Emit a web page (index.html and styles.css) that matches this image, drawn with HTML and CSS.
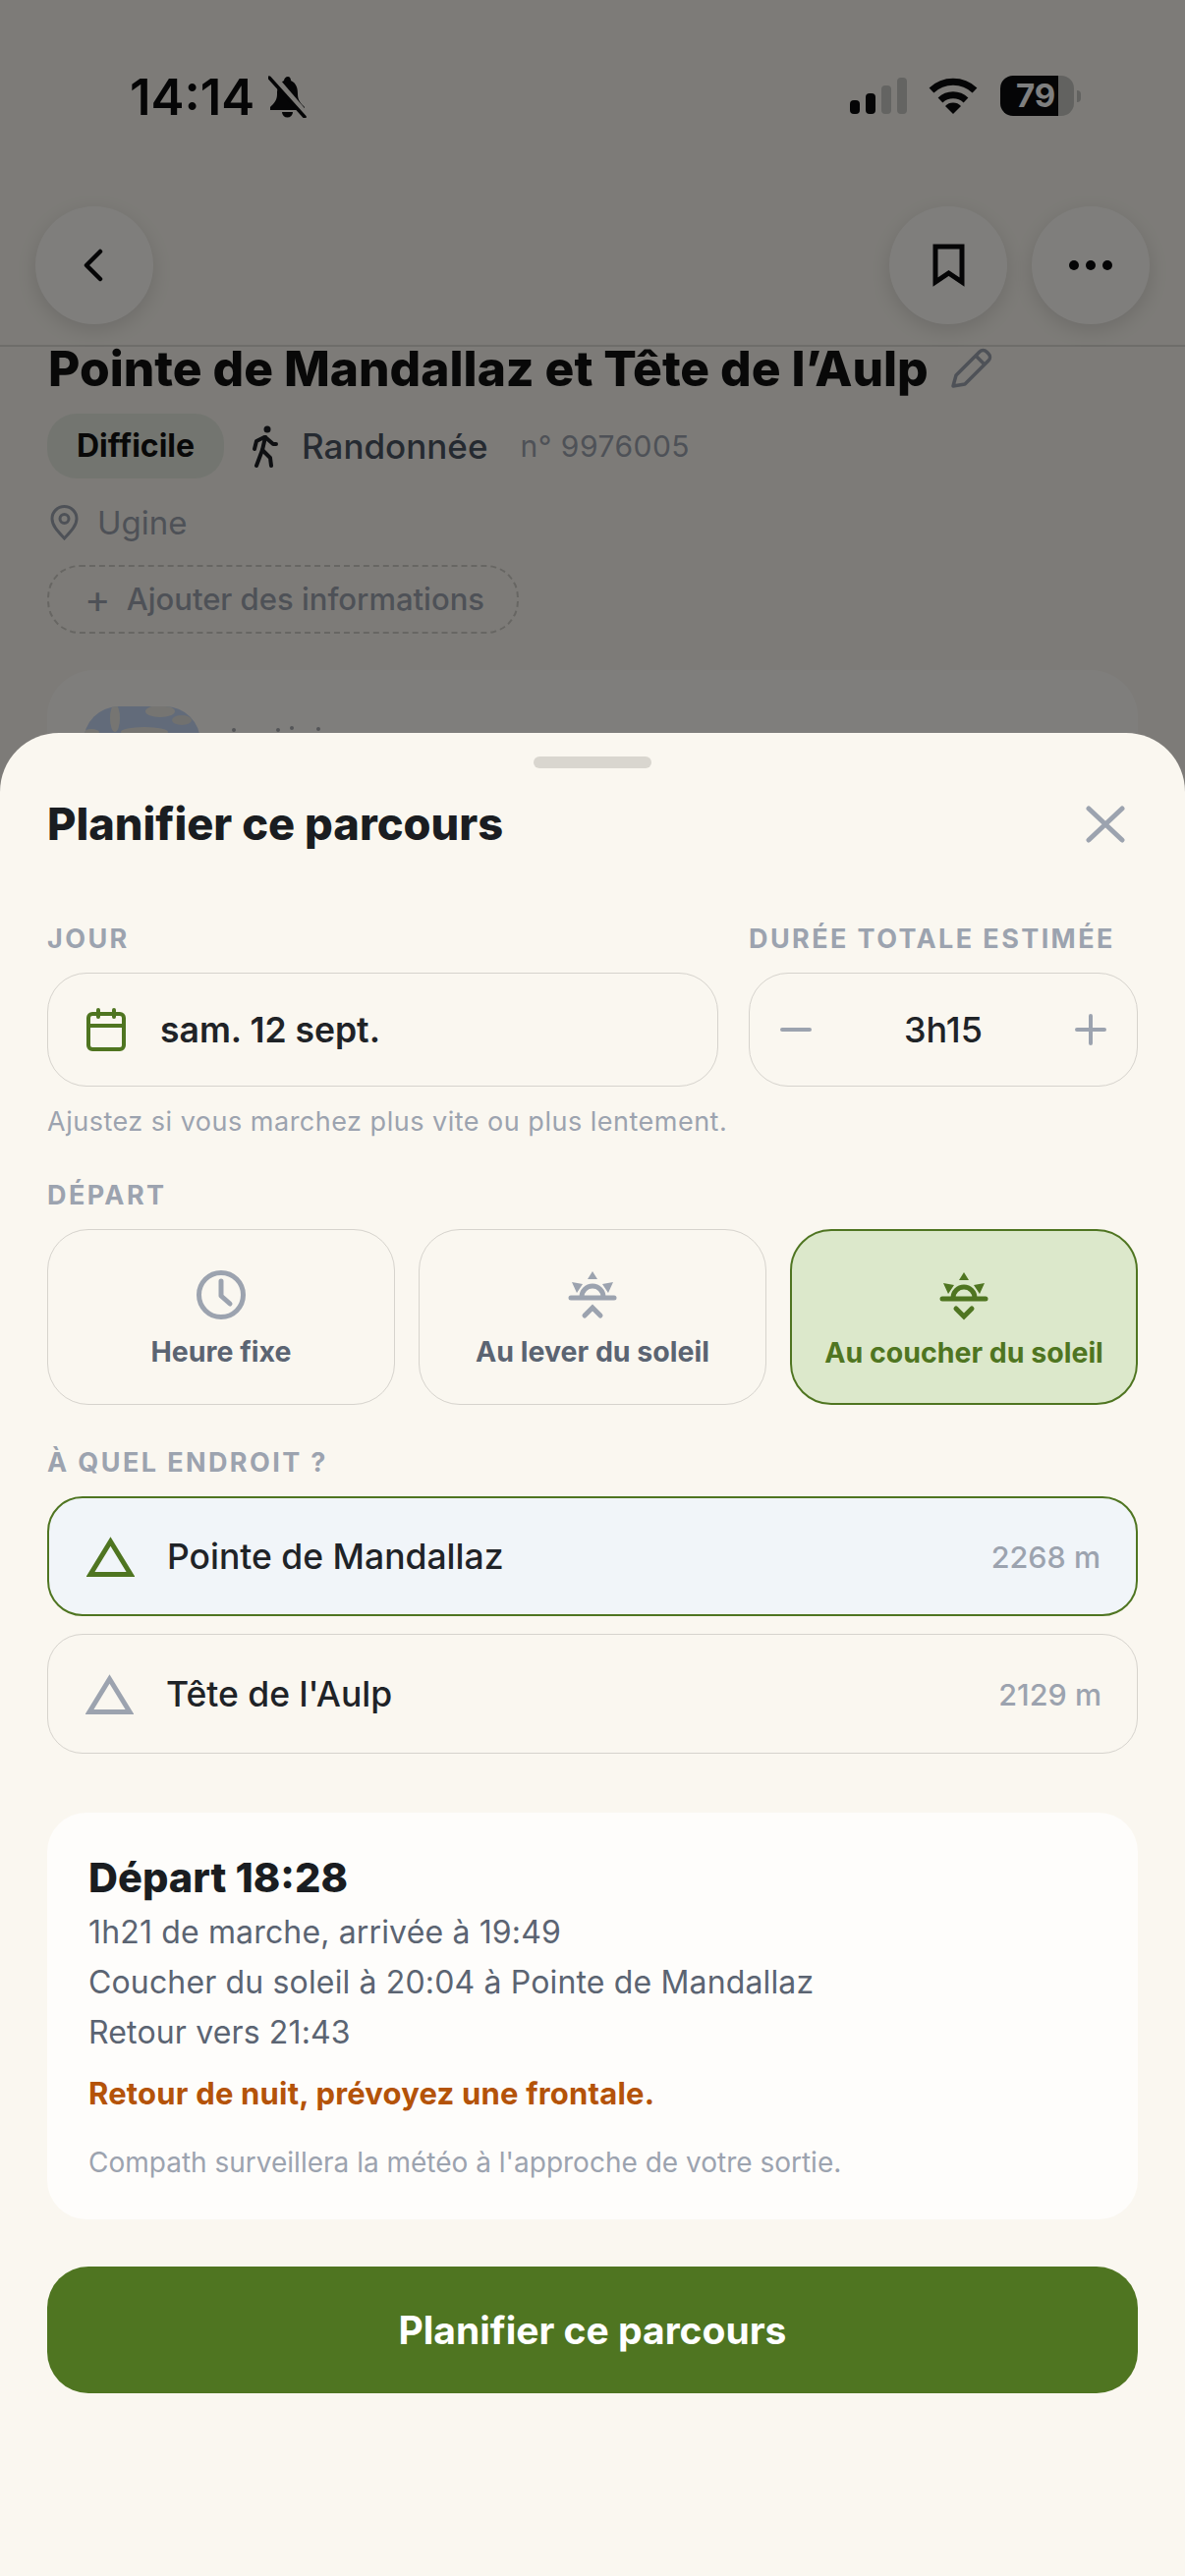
FILE: index.html

```html
<!DOCTYPE html>
<html lang="fr">
<head>
  <meta charset="UTF-8" />
  <meta name="viewport" content="width=device-width, initial-scale=1.0" />
  <title>Planifier ce parcours</title>
  <link rel="stylesheet" href="styles.css">
</head>
<body>

<div class="page">
  <div class="status-bar">
    <div class="status-left">
      <span class="clock">14:14</span>
      <svg class="bell" viewBox="0 0 39 43">
        <path d="M20 1c-2 0-4 2-4 4C10 8 9 13 9 19c0 6-3 9-7 13v3h35v-3c-4-4-7-7-7-13 0-6-1-11-7-14 0-2-1-4-3-4z" fill="#0a0a0c"/>
        <path d="M14 37a5.500 5.500 0 0 0 11 0z" fill="#0a0a0c"/>
        <path d="M4 0l35 41" stroke="#faf7f0" stroke-width="7"/>
        <path d="M1 2l36 40" stroke="#0a0a0c" stroke-width="3.500" stroke-linecap="round"/>
      </svg>
    </div>
    <div class="status-right">
      <div class="signal">
        <i class="bar b1"></i><i class="bar b2"></i><i class="bar b3 off"></i><i class="bar b4 off"></i>
      </div>
      <svg class="wifi" viewBox="0 0 50 37" fill="none" stroke="#0a0a0c" stroke-width="7">
        <path d="M3 13A32 32 0 0 1 47 13"/>
        <path d="M12 23A19 19 0 0 1 38 23"/>
        <path d="M25 37L17 29A11 11 0 0 1 33 29Z" fill="#0a0a0c" stroke="none"/>
      </svg>
      <div class="battery">
        <div class="battery-body"><span>79</span></div>
        <i class="battery-nub"></i>
      </div>
    </div>
  </div>

  <div class="topbar">
    <button class="round-btn">
      <svg class="ico-back" viewBox="0 0 20 34" fill="none" stroke="#0a0a0c" stroke-width="4.500" stroke-linecap="round" stroke-linejoin="round"><path d="M17 3L3 17l14 14"/></svg>
    </button>
    <div class="topbar-right">
      <button class="round-btn">
        <svg class="ico-bookmark" viewBox="0 0 33 44" fill="none" stroke="#0a0a0c" stroke-width="5"><path d="M3 3h27v36l-13.500-9L3 39z"/></svg>
      </button>
      <button class="round-btn">
        <svg class="ico-more" viewBox="0 0 44 10" fill="#0a0a0c"><circle cx="5" cy="5" r="5"/><circle cx="22" cy="5" r="5"/><circle cx="39" cy="5" r="5"/></svg>
      </button>
    </div>
  </div>

  <div class="route">
    <div class="route-title">
      <h1>Pointe de Mandallaz et Tête de l’Aulp</h1>
      <svg class="ico-pencil" viewBox="0 0 43 42" fill="none" stroke="#9ca3af" stroke-width="3.500" stroke-linejoin="round"><path d="M3 39l3-11L30 4c2-2 5-2 7 0l2 2c2 2 2 5 0 7L15 37z"/><path d="M26 8l9 9"/></svg>
    </div>
    <div class="route-meta">
      <span class="chip">Difficile</span>
      <svg class="ico-walk" viewBox="0 0 28 43" fill="none" stroke="#1c1f24" stroke-width="4" stroke-linecap="round" stroke-linejoin="round">
        <circle cx="17" cy="4" r="3.500" fill="#1c1f24" stroke="none"/>
        <path d="M15 12l-3 13-6 16"/>
        <path d="M12 25l8 8 1 8"/>
        <path d="M15 12l8 7h3"/>
        <path d="M14 12l-8 4-2 8"/>
      </svg>
      <span class="activity">Randonnée</span>
      <span class="ref">n° 9976005</span>
    </div>
    <div class="route-place">
      <svg class="ico-pin" viewBox="0 0 29 36" fill="none" stroke="#9ca3af" stroke-width="3"><path d="M14.500 34C8 27 2 21 2 14a12.500 12.500 0 0 1 25 0c0 7-6 13-12.500 20z"/><circle cx="14.500" cy="14" r="4.500"/></svg>
      <span>Ugine</span>
    </div>
    <div class="add-info"><span class="add-plus">+</span> Ajouter des informations</div>
    <div class="route-card">
      <svg class="thumb" viewBox="0 0 119 119">
        <rect width="119" height="119" fill="#c4d6f4"/>
        <ellipse cx="32" cy="12" rx="5" ry="14" fill="#ecebe4"/>
        <ellipse cx="78" cy="5" rx="15" ry="6" fill="#ecebe4"/>
        <ellipse cx="62" cy="26" rx="24" ry="5" fill="#ecebe4"/>
        <ellipse cx="100" cy="14" rx="10" ry="5" fill="#e2e2de"/>
        <ellipse cx="8" cy="26" rx="8" ry="3" fill="#ecebe4"/>
      </svg>
      <svg class="card-marks" viewBox="0 0 96 8" fill="#a8abb0"><circle cx="3" cy="6" r="2"/><circle cx="48" cy="6" r="2"/><circle cx="62" cy="4" r="2"/><circle cx="89" cy="5" r="2"/></svg>
    </div>
  </div>

  <div class="scrim"></div>

  <div class="sheet">
    <div class="handle"></div>
    <div class="sheet-head">
      <h2>Planifier ce parcours</h2>
      <svg class="ico-close" viewBox="0 0 40 38" fill="none" stroke="#9ca3af" stroke-width="5" stroke-linecap="round"><path d="M3 3l34 32M37 3L3 35"/></svg>
    </div>

    <div class="fields">
      <div>
        <div class="label">JOUR</div>
        <div class="field date-field">
          <svg class="ico-cal" viewBox="0 0 40 44" fill="none" stroke="#4f7521" stroke-width="4" stroke-linecap="round"><rect x="2" y="6" width="36" height="36" rx="4"/><path d="M2 18h36M12 2v7M28 2v7"/></svg>
          <span>sam. 12 sept.</span>
        </div>
      </div>
      <div>
        <div class="label">DURÉE TOTALE ESTIMÉE</div>
        <div class="field stepper">
          <svg class="ico-step" viewBox="0 0 32 32" fill="none" stroke="#9ca3af" stroke-width="4" stroke-linecap="round"><path d="M2 16h28"/></svg>
          <span>3h15</span>
          <svg class="ico-step" viewBox="0 0 32 32" fill="none" stroke="#9ca3af" stroke-width="4" stroke-linecap="round"><path d="M2 16h28M16 2v28"/></svg>
        </div>
      </div>
    </div>
    <p class="hint">Ajustez si vous marchez plus vite ou plus lentement.</p>

    <div class="label depart-label">DÉPART</div>
    <div class="options">
      <div class="option">
        <svg class="ico-opt" viewBox="0 0 50 50" fill="none" stroke="currentColor" stroke-width="5" stroke-linecap="round" stroke-linejoin="round"><circle cx="25" cy="25" r="22.500"/><path d="M25 11v15l9 8"/></svg>
        <span>Heure fixe</span>
      </div>
      <div class="option">
        <svg class="ico-opt" viewBox="0 0 50 48" fill="none" stroke="currentColor" stroke-width="5" stroke-linecap="round">
          <path d="M25 0l5 8H20zM4 11l11 2-6 9zM46 11l-11 2 6 9z" fill="currentColor" stroke="none"/>
          <path d="M14 26a11 11 0 0 1 22 0" stroke-linecap="butt"/>
          <path d="M3 27h44"/>
          <path d="M17 45l8-8 8 8" stroke-linejoin="miter"/>
        </svg>
        <span>Au lever du soleil</span>
      </div>
      <div class="option selected">
        <svg class="ico-opt" viewBox="0 0 50 48" fill="none" stroke="currentColor" stroke-width="5" stroke-linecap="round">
          <path d="M25 0l5 8H20zM4 11l11 2-6 9zM46 11l-11 2 6 9z" fill="currentColor" stroke="none"/>
          <path d="M14 26a11 11 0 0 1 22 0" stroke-linecap="butt"/>
          <path d="M3 27h44"/>
          <path d="M17 37l8 8 8-8" stroke-linejoin="miter"/>
        </svg>
        <span>Au coucher du soleil</span>
      </div>
    </div>

    <div class="label place-label">À QUEL ENDROIT ?</div>
    <div class="places">
      <div class="place selected">
        <svg class="ico-peak" viewBox="0 0 49 42" fill="none" stroke="currentColor" stroke-width="5"><path d="M24.500 6L45 39.500H4z"/></svg>
        <span class="place-name">Pointe de Mandallaz</span>
        <span class="place-alt">2268 m</span>
      </div>
      <div class="place">
        <svg class="ico-peak" viewBox="0 0 49 42" fill="none" stroke="currentColor" stroke-width="5"><path d="M24.500 6L45 39.500H4z"/></svg>
        <span class="place-name">Tête de l'Aulp</span>
        <span class="place-alt">2129 m</span>
      </div>
    </div>

    <div class="summary">
      <div class="summary-title">Départ 18:28</div>
      <div class="summary-lines">
        <div>1h21 de marche, arrivée à 19:49</div>
        <div>Coucher du soleil à 20:04 à Pointe de Mandallaz</div>
        <div>Retour vers 21:43</div>
      </div>
      <div class="summary-warn">Retour de nuit, prévoyez une frontale.</div>
      <div class="summary-foot">Compath surveillera la météo à l'approche de votre sortie.</div>
    </div>

    <button class="cta">Planifier ce parcours</button>
  </div>
</div>

</body>
</html>
```

FILE: styles.css

```css
* {
  box-sizing: border-box;
}
html, body {
  margin: 0;
  padding: 0;
  height: 2622px;
  overflow: hidden;
}
body {
  font-family: Inter, "Liberation Sans", sans-serif;
  background: #faf7f0;
  color: #1f2327;
}
svg {
  display: block;
  flex: none;
}
button {
  font-family: inherit;
  border: none;
  padding: 0;
}
.page {
  position: relative;
  width: 1206px;
  height: 2622px;
  overflow: hidden;
}

/* background page */
.status-bar {
  height: 170px;
  display: flex;
  justify-content: space-between;
  align-items: flex-start;
  padding: 77px 106px 0 132px;
}
.status-left {
  display: flex;
  align-items: center;
  gap: 14px;
}
.clock {
  font-size: 51px;
  font-weight: 600;
  line-height: 43px;
  color: #0a0a0c;
}
.bell {
  width: 39px;
  height: 43px;
}
.status-right {
  display: flex;
  align-items: flex-end;
  height: 41px;
}
.signal {
  display: flex;
  align-items: flex-end;
  gap: 6px;
  margin-right: 22px;
  margin-bottom: 2px;
}
.bar {
  display: block;
  width: 10px;
  border-radius: 4px;
  background: #0a0a0c;
}
.bar.off {
  background: #c8c8c4;
}
.b1 { height: 14px; }
.b2 { height: 21px; }
.b3 { height: 29px; }
.b4 { height: 37px; }
.wifi {
  width: 50px;
  height: 37px;
  margin-right: 23px;
  margin-bottom: 2px;
}
.battery {
  display: flex;
  align-items: center;
  gap: 3px;
}
.battery-body {
  width: 75px;
  height: 41px;
  border-radius: 13px;
  background: linear-gradient(90deg, #0a0a0c 79%, #c4c4c0 79%);
  color: #fff;
  font-size: 33px;
  font-weight: 700;
  line-height: 41px;
  padding-left: 16px;
}
.battery-nub {
  display: block;
  width: 4px;
  height: 12px;
  border-radius: 0 4px 4px 0;
  background: #c4c4c0;
}
.topbar {
  height: 183px;
  display: flex;
  justify-content: space-between;
  padding: 40px 36px 0;
  border-bottom: 2px solid #dcdad4;
}
.topbar-right {
  display: flex;
  gap: 25px;
}
.round-btn {
  width: 120px;
  height: 120px;
  border-radius: 50%;
  background: #fffdf9;
  box-shadow: 0 6px 20px rgba(0, 0, 0, 0.12);
  display: flex;
  align-items: center;
  justify-content: center;
}
.ico-back {
  width: 20px;
  height: 34px;
  margin-right: 2px;
}
.ico-bookmark {
  width: 33px;
  height: 44px;
}
.ico-more {
  width: 44px;
  height: 10px;
}
.route {
  padding: 0 48px;
}
.route-title {
  display: flex;
  align-items: center;
  gap: 22px;
  margin-top: -7px;
  padding-left: 1px;
}
h1 {
  margin: 0;
  font-size: 49.700px;
  line-height: 58px;
  font-weight: 800;
  color: #111;
  white-space: nowrap;
}
.ico-pencil {
  width: 43px;
  height: 42px;
}
.route-meta {
  display: flex;
  align-items: center;
  margin-top: 17px;
  height: 66px;
}
.chip {
  width: 180px;
  height: 66px;
  border-radius: 30px;
  background: #e6eae0;
  font-size: 32px;
  font-weight: 700;
  line-height: 66px;
  text-align: center;
  color: #111;
}
.ico-walk {
  width: 28px;
  height: 43px;
  margin-left: 27px;
}
.activity {
  font-size: 35px;
  font-weight: 500;
  margin-left: 24px;
  color: #4b5563;
}
.ref {
  font-size: 30px;
  margin-left: 33px;
  letter-spacing: 0.5px;
  color: #9ca3af;
}
.route-place {
  display: flex;
  align-items: center;
  gap: 19px;
  margin-top: 25px;
  padding-left: 3px;
  font-size: 33px;
  line-height: 40px;
  color: #9ca3af;
}
.ico-pin {
  width: 29px;
  height: 36px;
}
.add-info {
  width: 480px;
  height: 70px;
  margin-top: 23px;
  border: 2px dashed #cfccc6;
  border-radius: 33px;
  padding-left: 36px;
  font-size: 31px;
  line-height: 66px;
  font-weight: 500;
  color: #9ca3af;
  white-space: nowrap;
}
.add-plus {
  font-size: 40px;
  font-weight: 400;
  margin-right: 8px;
  vertical-align: -3px;
}
.route-card {
  margin-top: 37px;
  height: 300px;
  border-radius: 48px;
  background: #fffdf9;
  padding: 37px;
  display: flex;
  gap: 31px;
}
.thumb {
  width: 119px;
  height: 119px;
  border-radius: 36px;
}
.card-marks {
  width: 96px;
  height: 8px;
  margin-top: 18px;
}
.scrim {
  position: absolute;
  inset: 0;
  background: rgba(0, 0, 0, 0.5);
}

/* bottom sheet */
.sheet {
  position: absolute;
  left: 0;
  right: 0;
  bottom: 0;
  height: 1876px;
  background: #faf7f0;
  border-radius: 60px 60px 0 0;
  padding: 24px 48px 0;
}
.handle {
  width: 120px;
  height: 12px;
  margin: 0 auto;
  border-radius: 6px;
  background: #d9d6cf;
}
.sheet-head {
  display: flex;
  justify-content: space-between;
  align-items: center;
  margin-top: 29px;
  padding-right: 13px;
}
h2 {
  margin: 0;
  font-size: 45.200px;
  line-height: 56px;
  font-weight: 800;
  color: #1a1d21;
}
.ico-close {
  width: 40px;
  height: 38px;
}
.fields {
  display: grid;
  grid-template-columns: 1fr 396px;
  gap: 31px;
  margin-top: 73px;
}
.label {
  font-size: 27px;
  line-height: 32px;
  font-weight: 700;
  letter-spacing: 2.400px;
  color: #9ca3af;
  white-space: nowrap;
}
.field {
  height: 116px;
  margin-top: 18px;
  border: 1.500px solid #d6d3cd;
  border-radius: 40px;
  display: flex;
  align-items: center;
  font-size: 36px;
}
.date-field {
  gap: 35px;
  padding-left: 39px;
  font-weight: 600;
  font-size: 35.500px;
}
.ico-cal {
  width: 40px;
  height: 44px;
}
.stepper {
  justify-content: space-between;
  padding: 0 31px;
  font-weight: 500;
}
.ico-step {
  width: 32px;
  height: 32px;
}
.hint {
  margin: 18px 0 0;
  font-size: 27px;
  line-height: 36px;
  letter-spacing: 0.500px;
  color: #9ca3af;
}
.depart-label {
  margin-top: 41px;
}
.options {
  display: grid;
  grid-template-columns: repeat(3, 1fr);
  gap: 24px;
  margin-top: 18px;
}
.option {
  height: 179px;
  padding-top: 41px;
  border: 1.500px solid #d6d3cd;
  border-radius: 42px;
  display: flex;
  flex-direction: column;
  align-items: center;
  color: #9ca3af;
}
.option span {
  margin-top: 13px;
  font-size: 28.500px;
  line-height: 40px;
  font-weight: 700;
  color: #5b6472;
  white-space: nowrap;
}
.option.selected {
  background: #dce8cb;
  border: 2px solid #4f7521;
  color: #4f7521;
}
.option.selected span {
  color: #4f7521;
}
.ico-opt {
  width: 50px;
  height: 50px;
}
.place-label {
  margin-top: 43px;
}
.places {
  display: flex;
  flex-direction: column;
  gap: 18px;
  margin-top: 18px;
}
.place {
  height: 122px;
  padding: 0 36px 0 38px;
  border: 1.500px solid #d6d3cd;
  border-radius: 36px;
  display: flex;
  align-items: center;
  color: #9ca3af;
}
.place.selected {
  background: #f1f5f9;
  border: 2px solid #4f7521;
  color: #4f7521;
}
.ico-peak {
  width: 49px;
  height: 42px;
}
.place-name {
  margin-left: 33px;
  font-size: 35.500px;
  font-weight: 500;
  color: #1f2327;
}
.place-alt {
  margin-left: auto;
  font-size: 30.500px;
  font-weight: 500;
  color: #9ca3af;
}
.summary {
  margin-top: 60px;
  height: 414px;
  padding: 43px 42px 0;
  border-radius: 40px;
  background: #fefdfb;
}
.summary-title {
  font-size: 41.500px;
  line-height: 46px;
  font-weight: 800;
  color: #1a1d21;
}
.summary-lines {
  margin-top: 7px;
  font-size: 32px;
  line-height: 51px;
  letter-spacing: 0.150px;
  color: #5b6472;
}
.summary-warn {
  margin-top: 17px;
  font-size: 31px;
  line-height: 40px;
  letter-spacing: 0.200px;
  font-weight: 700;
  color: #b45309;
}
.summary-foot {
  margin-top: 32px;
  font-size: 28px;
  line-height: 36px;
  color: #9ca3af;
}
.cta {
  display: block;
  width: 100%;
  height: 129px;
  margin-top: 48px;
  border-radius: 42px;
  background: #4f7521;
  color: #fff;
  font-size: 39px;
  font-weight: 700;
}
```
